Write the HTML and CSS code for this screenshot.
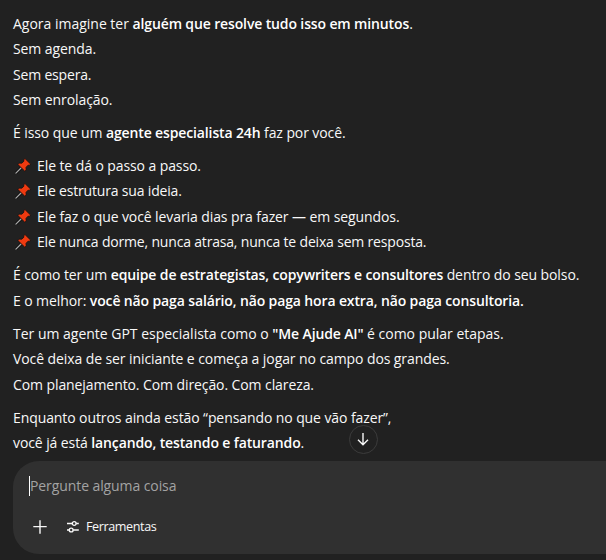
FILE: index.html
```html
<!DOCTYPE html>
<html lang="pt-BR">
<head>
    <meta charset="UTF-8">
    <meta name="viewport" content="width=device-width, initial-scale=1.0">
    <title>Me Ajude AI</title>
    <link rel="stylesheet" href="styles.css">
</head>
<body>

    <svg class="sprite" aria-hidden="true">
        <symbol id="pin" viewBox="0 0 16 16">
            <path d="M0.9 15.1 L6.3 9.7" stroke="#0c0c0c" stroke-width="2.8" stroke-linecap="round"/>
            <path d="M0.9 15.1 L6.3 9.7" stroke="#a9a9a9" stroke-width="1.3" stroke-linecap="round"/>
            <path d="M10 0.6 L15.5 6 L14.6 7.4 L13 7.2 L11 9.4 L11.2 12 L9.8 13.2 L2.9 6.5 L4.1 5.1 L6.8 5.2 L8.9 3.2 L8.7 1.7 Z" fill="#f03a10" stroke="#111111" stroke-width="0.8" stroke-linejoin="round"/>
        </symbol>
    </svg>

    <main class="message">
        <p>
            <span class="loose">Agora imagine ter <strong>alguém que resolve tudo isso em minutos</strong>.</span><br>
            Sem agenda.<br>
            <span class="tight">Sem espera.</span><br>
            Sem enrolação.
        </p>
        <p>É isso que um <strong>agente especialista 24h</strong> faz por você.</p>
        <p>
            <svg class="pin"><use href="#pin"/></svg>Ele te dá o passo a passo.<br>
            <svg class="pin"><use href="#pin"/></svg><span class="tight">Ele estrutura sua ideia.</span><br>
            <svg class="pin"><use href="#pin"/></svg>Ele faz o que você levaria dias pra fazer — em segundos.<br>
            <svg class="pin"><use href="#pin"/></svg><span class="tight">Ele nunca dorme, nunca atrasa, nunca te deixa sem resposta.</span>
        </p>
        <p>
            É como ter um <strong>equipe de estrategistas, copywriters e consultores</strong> dentro do seu bolso.<br>
            E o melhor: <strong>você não paga salário, não paga hora extra, não paga consultoria.</strong>
        </p>
        <p>
            <span class="loose">Ter um agente GPT especialista como o <strong>"Me Ajude AI"</strong> é como pular etapas.</span><br>
            Você deixa de ser iniciante e começa a jogar no campo dos grandes.<br>
            Com planejamento. Com direção. Com clareza.
        </p>
        <p>
            Enquanto outros ainda estão “pensando no que vão fazer”,<br>
            você já está <strong>lançando, testando e faturando</strong>.
        </p>
    </main>

    <button class="scroll-down" aria-label="Rolar para baixo">
        <svg width="15" height="15" viewBox="0 0 15 15">
            <path d="M7 1 V12.8 M2 7.8 L7 12.8 L12 7.8"/>
        </svg>
    </button>

    <section class="composer">
        <div class="prompt"><span class="caret"></span><span class="placeholder">Pergunte alguma coisa</span></div>
        <div class="actions">
            <svg class="icon" width="14" height="14" viewBox="0 0 14 14">
                <path d="M7 0.3 V13.7 M0.3 6.6 H13.7"/>
            </svg>
            <svg class="icon tools-icon" width="14" height="14" viewBox="0 0 14 14">
                <path d="M1 3.5 H6 M10.2 3.5 H12.8 M1 10 H3 M7.2 10 H12.8"/>
                <circle cx="8.2" cy="3.5" r="1.9"/>
                <circle cx="5.2" cy="10" r="1.9"/>
            </svg>
            <span class="tools-label">Ferramentas</span>
        </div>
    </section>

</body>
</html>
```
FILE: styles.css
```css
body {
    margin: 0;
    height: 560px;
    overflow: hidden;
    position: relative;
    background-color: #212121;
    color: #f8f8f8;
    font-family: "Open Sans", "Noto Sans", sans-serif;
    font-size: 14px;
    letter-spacing: -0.09px;
}

.sprite {
    position: absolute;
    width: 0;
    height: 0;
}

.message {
    padding: 10.7px 0 0 13px;
    height: 450.3px;
    line-height: 25.5px;
    white-space: nowrap;
}

.message p {
    margin: 0 0 7.4px;
}

.message strong {
    font-weight: 600;
    color: #ffffff;
    letter-spacing: -0.13px;
}

.tight {
    letter-spacing: -0.18px;
}

.loose {
    letter-spacing: -0.01px;
}

.pin {
    width: 16px;
    height: 16px;
    margin: 0 6px 0 2px;
    vertical-align: -3px;
}

.scroll-down {
    position: absolute;
    left: 349px;
    top: 425px;
    width: 29px;
    height: 29px;
    padding: 0;
    display: flex;
    align-items: center;
    justify-content: center;
    background: #212121;
    border: 1px solid #3c3c3c;
    border-radius: 50%;
}

.scroll-down svg,
.icon {
    fill: none;
    stroke: #f8f8f8;
    stroke-width: 1.4;
}

.composer {
    box-sizing: border-box;
    height: 93px;
    margin-left: 13px;
    padding: 15px 16px 0;
    background: #303030;
    border-radius: 26px 0 0 26px;
}

.prompt {
    display: flex;
    align-items: center;
    height: 20px;
    color: #a3a3a3;
}

.caret {
    width: 1px;
    height: 20px;
    background: #ffffff;
}

.actions {
    display: flex;
    align-items: center;
    height: 20px;
    margin-top: 21px;
    padding-left: 4px;
}

.tools-icon {
    margin-left: 19px;
}

.tools-label {
    margin-left: 6px;
    font-size: 12.6px;
    letter-spacing: -0.4px;
}
```
